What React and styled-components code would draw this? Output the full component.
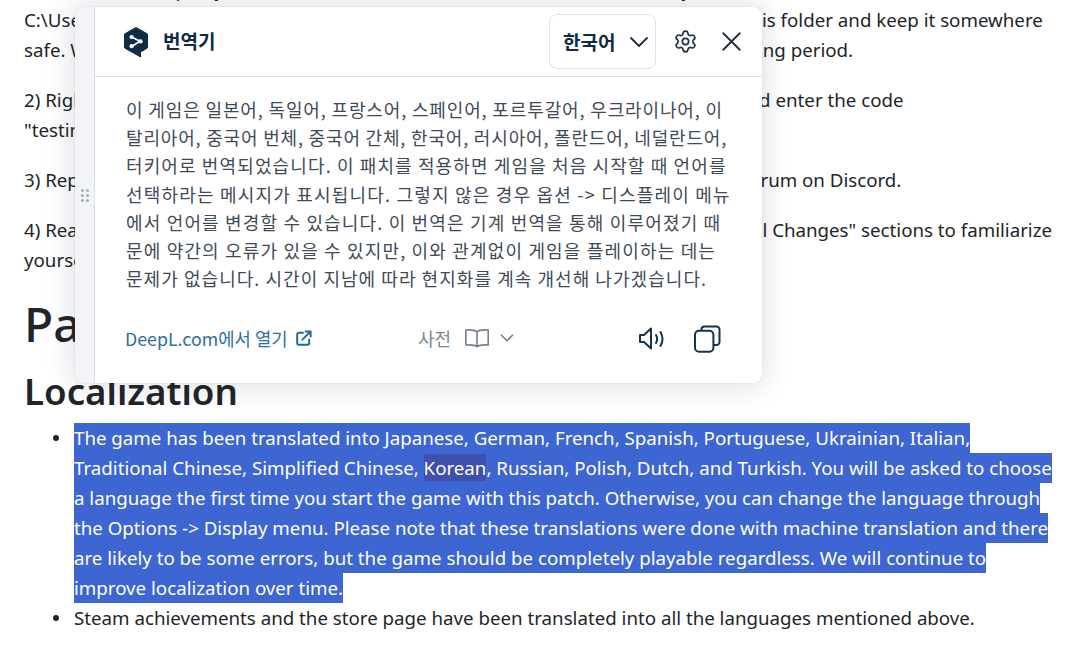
import styled, { createGlobalStyle } from "styled-components"
import { ChevronDown, Settings, X } from "lucide-react"

const GlobalStyle = createGlobalStyle`
    html, body {
        margin: 0;
        padding: 0;
        background: #fff;
    }
`

const koreanLines = [
    { text: "이 게임은 일본어, 독일어, 프랑스어, 스페인어, 포르투갈어, 우크라이나어, 이", spacing: 0.86 },
    { text: "탈리아어, 중국어 번체, 중국어 간체, 한국어, 러시아어, 폴란드어, 네덜란드어,", spacing: 0.82 },
    { text: "터키어로 번역되었습니다. 이 패치를 적용하면 게임을 처음 시작할 때 언어를", spacing: 1.12 },
    { text: "선택하라는 메시지가 표시됩니다. 그렇지 않은 경우 옵션 -> 디스플레이 메뉴", spacing: 1.2 },
    { text: "에서 언어를 변경할 수 있습니다. 이 번역은 기계 번역을 통해 이루어졌기 때", spacing: 1.17 },
    { text: "문에 약간의 오류가 있을 수 있지만, 이와 관계없이 게임을 플레이하는 데는", spacing: 1.17 },
    { text: "문제가 없습니다. 시간이 지남에 따라 현지화를 계속 개선해 나가겠습니다.", spacing: 1.05 },
]

export default function App() {
    return (
        <Page>
            <GlobalStyle />
            <Article>
                <Para>
                    <Line>1) Create a backup of your<Hidden $w={358} />directory</Line>
                    <Line>C:\Users<Hidden $w={646} />this folder and keep it somewhere</Line>
                    <Line>safe. We<Hidden $w={627} />testing period.</Line>
                </Para>
                <Para>
                    <Line>2) Right-click<Hidden $w={602} />and enter the code</Line>
                    <Line>"testing"</Line>
                </Para>
                <Para>
                    <Line>3) Report<Hidden $w={638} />forum on Discord.</Line>
                </Para>
                <Para>
                    <Line>4) Read<Hidden $w={647} />Full Changes" sections to familiarize</Line>
                    <Line>yourself</Line>
                </Para>
                <Title>Patch Notes</Title>
                <Subtitle>Localization</Subtitle>
                <List>
                    <li>
                        <Selected>The game has been translated into Japanese, German, French, Spanish, Portuguese, Ukrainian, Italian,</Selected>
                        <Selected>Traditional Chinese, Simplified Chinese, <Focus>Korean</Focus>, Russian, Polish, Dutch, and Turkish. You will be asked to choose</Selected>
                        <Selected>a language the first time you start the game with this patch. Otherwise, you can change the language through</Selected>
                        <Selected>the Options -&gt; Display menu. Please note that these translations were done with machine translation and there</Selected>
                        <Selected>are likely to be some errors, but the game should be completely playable regardless. We will continue to</Selected>
                        <Selected>improve localization over time.</Selected>
                    </li>
                    <li>Steam achievements and the store page have been translated into all the languages mentioned above.</li>
                </List>
            </Article>

            <Popup>
                <Grip>
                    <GripDots>
                        {[0, 1, 2, 3, 4, 5].map((dot) => <i key={dot} />)}
                    </GripDots>
                </Grip>
                <PopupMain>
                    <Header>
                        <Brand>
                            <svg width="26" height="32" viewBox="0 0 26 32">
                                <path d="M13 1.5 L24.5 8 V21 Q24.5 22 23.6 22.6 L17.5 26 V31 L12 27.8 L2.2 22.4 Q1.5 22 1.5 21 V8 Z" fill="#0f2b46" stroke="#0f2b46" strokeLinejoin="round" />
                                <path d="M9 11.2 L17 15.2 L9.6 20" fill="none" stroke="#fff" strokeWidth="1.6" />
                                <circle cx="8.6" cy="11" r="2.1" fill="#fff" />
                                <circle cx="8.6" cy="20.2" r="2.1" fill="#fff" />
                                <circle cx="17.6" cy="15.4" r="2.1" fill="#fff" />
                            </svg>
                            <BrandName>번역기</BrandName>
                        </Brand>
                        <HeaderTools>
                            <LangSelect>
                                <span>한국어</span>
                                <ChevronDown size={32} strokeWidth={1.4} color="#1f2f44" />
                            </LangSelect>
                            <IconSlot $left={17} $w={24}>
                                <Settings size={25} strokeWidth={1.6} color="#1f2f44" />
                            </IconSlot>
                            <IconSlot $left={21} $w={26}>
                                <X size={33} strokeWidth={1.35} color="#1f2f44" />
                            </IconSlot>
                        </HeaderTools>
                    </Header>
                    <Body>
                        {koreanLines.map((line) => (
                            <BodyLine key={line.text} $spacing={line.spacing}>{line.text}</BodyLine>
                        ))}
                    </Body>
                    <Footer>
                        <DeepLLink>
                            DeepL.com에서 열기
                            <svg width="16" height="16" viewBox="0 0 16 16" fill="none" stroke="#1d6a9c" strokeWidth="2" strokeLinecap="round" strokeLinejoin="round">
                                <path d="M7 2.8 H3 A1.8 1.8 0 0 0 1.2 4.6 V13 A1.8 1.8 0 0 0 3 14.8 H11.4 A1.8 1.8 0 0 0 13.2 13 V9.4" />
                                <path d="M6.4 9.6 L14.4 1.6 M9.6 1.4 H14.6 V6.4" />
                            </svg>
                        </DeepLLink>
                        <Dictionary>
                            <span>사전</span>
                            <svg width="26" height="20" viewBox="0 0 26 20" fill="none" stroke="#75808d" strokeWidth="1.6" strokeLinejoin="round">
                                <path d="M13 4 C11 2 7 1.6 1.8 2 V17 C7 16.6 11 17 13 18.6 C15 17 19 16.6 24.2 17 V2 C19 1.6 15 2 13 4 Z M13 4 V18.6" />
                            </svg>
                            <ChevronDown size={22} strokeWidth={1.8} color="#75808d" />
                        </Dictionary>
                        <Actions>
                            <svg width="27" height="26" viewBox="0 0 27 26" fill="none" stroke="#17324f" strokeWidth="2" strokeLinecap="round" strokeLinejoin="round">
                                <path d="M2 9 V16 H6 L13 22.5 V2.5 L6 9 Z" />
                                <path d="M18 9 Q20.3 13 18 17" />
                                <path d="M22.5 6 Q26.5 13 22.5 20" />
                            </svg>
                            <svg width="28" height="28" viewBox="0 0 28 28" fill="none" stroke="#17324f" strokeWidth="2" strokeLinejoin="round">
                                <path d="M8.5 5.5 V4.5 A3 3 0 0 1 11.5 1.5 H23.5 A3 3 0 0 1 26.5 4.5 V17 A3 3 0 0 1 23.5 20 H20.5" />
                                <rect x="2" y="5.8" width="18.4" height="21" rx="4" fill="#fff" />
                            </svg>
                        </Actions>
                    </Footer>
                </PopupMain>
            </Popup>
        </Page>
    )
}

const Page = styled.div`
    position: relative;
    width: 1090px;
    height: 645px;
    overflow: hidden;
    font-family: "Noto Sans", sans-serif;
    font-size: 18.72px;
    line-height: 30px;
    color: #212529;
    background: #fff;
`
const Article = styled.div`
    padding: 0 24px;
    margin-top: -25px;
`
const Para = styled.div`
    margin-bottom: 20px;
`
const Line = styled.div`
    white-space: nowrap;
`
const Hidden = styled.span`
    display: inline-block;
    width: ${(props) => props.$w}px;
`
const Title = styled.h1`
    margin: 0 0 17px;
    font-size: 48px;
    line-height: 58px;
    font-weight: 500;
`
const Subtitle = styled.h2`
    margin: 0 0 11px;
    font-size: 36.7px;
    line-height: 42px;
    font-weight: 600;
`
const List = styled.ul`
    margin: 0;
    padding-left: 50px;
    list-style: none;
    white-space: nowrap;
    li {
        position: relative;
    }
    li::before {
        content: "";
        position: absolute;
        left: -21px;
        top: 12px;
        width: 6px;
        height: 6px;
        border-radius: 50%;
        background: #212529;
    }
`
const Selected = styled.span`
    display: block;
    width: fit-content;
    background: #3d66d3;
    color: #fff;
`
const Focus = styled.span`
    padding: 1px 0;
    background: #3e4fad;
`
const Popup = styled.div`
    position: absolute;
    left: 75px;
    top: 7px;
    width: 687px;
    height: 376px;
    display: flex;
    border-radius: 8px;
    overflow: hidden;
    background: #fff;
    box-shadow: 0 0 30px rgba(30, 40, 60, 0.18), 0 0 1px rgba(30, 40, 60, 0.3);
    font-family: "Noto Sans CJK KR", "Noto Sans", sans-serif;
`
const Grip = styled.div`
    width: 19px;
    display: flex;
    align-items: center;
    justify-content: center;
    background: #f3f4f7;
    border-right: 1px solid #dae1e9;
`
const GripDots = styled.div`
    display: grid;
    grid-template-columns: 3px 3px;
    gap: 2px;
    i {
        width: 3px;
        height: 3px;
        border-radius: 50%;
        background: #a9aeb6;
    }
`
const PopupMain = styled.div`
    flex: 1;
    display: flex;
    flex-direction: column;
    min-width: 0;
`
const Header = styled.div`
    height: 69px;
    display: flex;
    align-items: center;
    justify-content: space-between;
    padding: 0 18px 0 28px;
    border-bottom: 1px solid #dae1e9;
`
const Brand = styled.div`
    display: flex;
    align-items: center;
    gap: 14px;
`
const BrandName = styled.span`
    font-size: 19px;
    line-height: 26px;
    margin-bottom: 2px;
    font-weight: 700;
    color: #0f2b46;
`
const HeaderTools = styled.div`
    display: flex;
    align-items: center;
`
const LangSelect = styled.div`
    width: 107px;
    height: 55px;
    box-sizing: border-box;
    display: flex;
    align-items: center;
    justify-content: space-between;
    padding: 0 0 0 13px;
    border: 1px solid #e0e4ea;
    border-radius: 8px;
    font-size: 19px;
    font-weight: 700;
    color: #0f2b46;
`
const IconSlot = styled.div`
    display: flex;
    justify-content: center;
    align-items: center;
    width: ${(props) => props.$w}px;
    margin-left: ${(props) => props.$left}px;
    svg {
        flex-shrink: 0;
    }
`
const Body = styled.div`
    flex: 1;
    padding: 18px 0 0 31px;
`
const BodyLine = styled.div`
    font-size: 18px;
    line-height: 28.2px;
    letter-spacing: ${(props) => props.$spacing}px;
    color: #3f4a58;
    white-space: nowrap;
`
const Footer = styled.div`
    height: 60px;
    display: flex;
    align-items: flex-start;
    padding: 0 41px 0 30px;
`
const DeepLLink = styled.div`
    width: 293px;
    display: flex;
    align-items: center;
    gap: 8px;
    height: 30px;
    padding-bottom: 2px;
    font-size: 17.8px;
    color: #2f6f9f;
`
const Dictionary = styled.div`
    display: flex;
    align-items: center;
    height: 30px;
    padding-bottom: 2px;
    gap: 13px;
    font-size: 18px;
    color: #7b8794;
    svg:last-child {
        margin-left: -7px;
    }
`
const Actions = styled.div`
    margin-left: auto;
    height: 32px;
    display: flex;
    align-items: center;
    gap: 28px;
`
